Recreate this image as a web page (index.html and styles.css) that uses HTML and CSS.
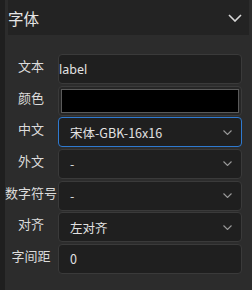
FILE: index.html
```html
<!DOCTYPE html>
<html lang="zh">
<head>
<meta charset="utf-8">
<link rel="stylesheet" href="styles.css">
</head>
<body>
<div class="app">
  <div class="strip"></div>
  <div class="panel">
    <div class="header">
      <span class="title">字体</span>
      <svg class="chev-big" width="14" height="8" viewBox="0 0 14 8"><path d="M1 1 L7 7 L13 1" fill="none" stroke="#d8d8d8" stroke-width="1.6"/></svg>
    </div>
    <div class="form">
      <div class="label">文本</div>
      <div class="field text-field">label</div>

      <div class="label">颜色</div>
      <div class="field color-field"><div class="swatch"></div></div>

      <div class="label">中文</div>
      <div class="field select focus"><span>宋体-GBK-16x16</span><svg class="chev" width="9" height="5" viewBox="0 0 9 5"><path d="M0.5 0.5 L4.5 4.5 L8.5 0.5" fill="none" stroke="#9a9a9a" stroke-width="1.1"/></svg></div>

      <div class="label">外文</div>
      <div class="field select"><span>-</span><svg class="chev" width="9" height="5" viewBox="0 0 9 5"><path d="M0.5 0.5 L4.5 4.5 L8.5 0.5" fill="none" stroke="#9a9a9a" stroke-width="1.1"/></svg></div>

      <div class="label">数字符号</div>
      <div class="field select"><span>-</span><svg class="chev" width="9" height="5" viewBox="0 0 9 5"><path d="M0.5 0.5 L4.5 4.5 L8.5 0.5" fill="none" stroke="#9a9a9a" stroke-width="1.1"/></svg></div>

      <div class="label">对齐</div>
      <div class="field select"><span>左对齐</span><svg class="chev" width="9" height="5" viewBox="0 0 9 5"><path d="M0.5 0.5 L4.5 4.5 L8.5 0.5" fill="none" stroke="#9a9a9a" stroke-width="1.1"/></svg></div>

      <div class="label">字间距</div>
      <div class="field select"><span>0</span></div>
    </div>
  </div>
</div>
</body>
</html>
```
FILE: styles.css
```css
* { box-sizing: border-box; }
html, body {
  margin: 0;
  padding: 0;
  width: 252px;
  height: 290px;
  overflow: hidden;
  background: #2c2c2c;
  font-family: "Noto Sans CJK SC", "Noto Sans", sans-serif;
}
.app {
  display: flex;
  height: 290px;
}
.strip {
  width: 5px;
  background: #1f1f1f;
  flex: none;
}
.panel {
  flex: 1;
  background: #2c2c2c;
  padding-left: 3px;
  padding-right: 3px;
}
.header {
  height: 35px;
  background: #232323;
  display: flex;
  align-items: center;
  justify-content: space-between;
  padding-right: 7px;
}
.title {
  color: #e6e6e6;
  font-size: 15.5px;
  line-height: 20px;
}
.chev-big { display: block; margin-top: 1px; }
.form {
  display: grid;
  grid-template-columns: 52px 184px;
  column-gap: 1px;
  row-gap: 1.67px;
  margin-top: 19px;
  margin-left: -3px;
}
.label {
  color: #dcdcdc;
  font-size: 13px;
  line-height: 20px;
  padding-top: 2px;
  text-align: center;
  white-space: nowrap;
}
.field {
  height: 30px;
  border: 1px solid #3a3a3a;
  border-radius: 4px;
  background: #1f1f1f;
  color: #e2e2e2;
  font-size: 12.5px;
  display: flex;
  align-items: center;
}
.text-field {
  padding-left: 0;
  font-family: "Noto Sans", sans-serif;
}
.color-field {
  padding: 2px;
  background: #262626;
}
.swatch {
  width: 100%;
  height: 100%;
  background: #000;
  border: 1px solid #5a5a5a;
}
.select {
  padding-left: 11px;
  padding-right: 9px;
  justify-content: space-between;
}
.select.focus {
  border-color: #2f7ad0;
}
.chev { display: block; }
```
